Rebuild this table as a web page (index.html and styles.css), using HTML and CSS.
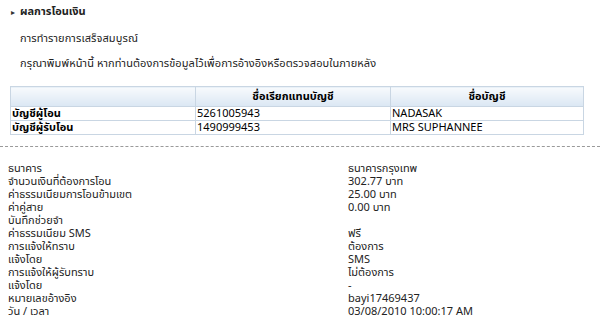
FILE: index.html
```html
<!DOCTYPE html>
<html lang="th">
<head>
<meta charset="utf-8">
<link rel="stylesheet" href="styles.css">
</head>
<body>
<div class="page">
  <div class="title"><span class="arrow">&#9656;</span>ผลการโอนเงิน</div>
  <p class="msg msg1">การทำรายการเสร็จสมบูรณ์</p>
  <p class="msg msg2">กรุณาพิมพ์หน้านี้ หากท่านต้องการข้อมูลไว้เพื่อการอ้างอิงหรือตรวจสอบในภายหลัง</p>
  <table class="acct">
    <thead>
      <tr><th class="c1"></th><th class="c2">ชื่อเรียกแทนบัญชี</th><th class="c3">ชื่อบัญชี</th></tr>
    </thead>
    <tbody>
      <tr><td class="lbl">บัญชีผู้โอน</td><td>5261005943</td><td>NADASAK</td></tr>
      <tr><td class="lbl">บัญชีผู้รับโอน</td><td>1490999453</td><td>MRS SUPHANNEE</td></tr>
    </tbody>
  </table>
  <div class="sep"></div>
  <div class="details">
    <div class="k">ธนาคาร</div><div class="v">ธนาคารกรุงเทพ</div>
    <div class="k">จำนวนเงินที่ต้องการโอน</div><div class="v">302.77 บาท</div>
    <div class="k">ค่าธรรมเนียมการโอนข้ามเขต</div><div class="v">25.00 บาท</div>
    <div class="k">ค่าคู่สาย</div><div class="v">0.00 บาท</div>
    <div class="k">บันทึกช่วยจำ</div><div class="v"></div>
    <div class="k">ค่าธรรมเนียม SMS</div><div class="v">ฟรี</div>
    <div class="k">การแจ้งให้ทราบ</div><div class="v">ต้องการ</div>
    <div class="k">แจ้งโดย</div><div class="v">SMS</div>
    <div class="k">การแจ้งให้ผู้รับทราบ</div><div class="v">ไม่ต้องการ</div>
    <div class="k">แจ้งโดย</div><div class="v">-</div>
    <div class="k">หมายเลขอ้างอิง</div><div class="v">bayi17469437</div>
    <div class="k">วัน / เวลา</div><div class="v">03/08/2010 10:00:17 AM</div>
  </div>
</div>
</body>
</html>
```
FILE: styles.css
```css
html, body {
  margin: 0;
  padding: 0;
  background: #ffffff;
}
body {
  font-family: Tahoma, "Noto Sans Thai", "Noto Sans", "DejaVu Sans", sans-serif;
  font-size: 11px;
  color: #222222;
}
.page {
  width: 600px;
  height: 320px;
  overflow: hidden;
}
.title {
  font-weight: bold;
  padding: 4px 0 0 11px;
  line-height: 16px;
  height: 16px;
}
.arrow {
  font-size: 8px;
  display: inline-block;
  width: 9px;
  color: #333;
}
.msg {
  margin: 0;
  padding-left: 20px;
  line-height: 14px;
  letter-spacing: 0.1px;
}
.msg1 { margin-top: 12px; }
.msg2 { margin-top: 11px; }
.acct {
  margin: 15px 0 0 10px;
  width: 574px;
  border-collapse: collapse;
  color: #000;
}
.acct th {
  height: 19px;
  padding: 0;
  border: 1px solid #c9d6e3;
  background: linear-gradient(#f7fafd, #dbe7f3);
  font-weight: bold;
  text-align: center;
}
.acct .c1 { width: 184px; }
.acct .c2 { width: 194px; }
.acct td {
  padding: 0 0 0 1px;
  height: 13px;
  line-height: 13px;
  border: 1px solid #c9d6e3;
}
.acct td.lbl { font-weight: bold; }
.sep {
  margin-top: 11px;
  border-top: 1px dashed #9a9a9a;
}
.details {
  display: grid;
  grid-template-columns: 340px 1fr;
  margin: 15px 0 0 8px;
  line-height: 13px;
}
.details .k, .details .v { height: 13px; white-space: nowrap; }
```
